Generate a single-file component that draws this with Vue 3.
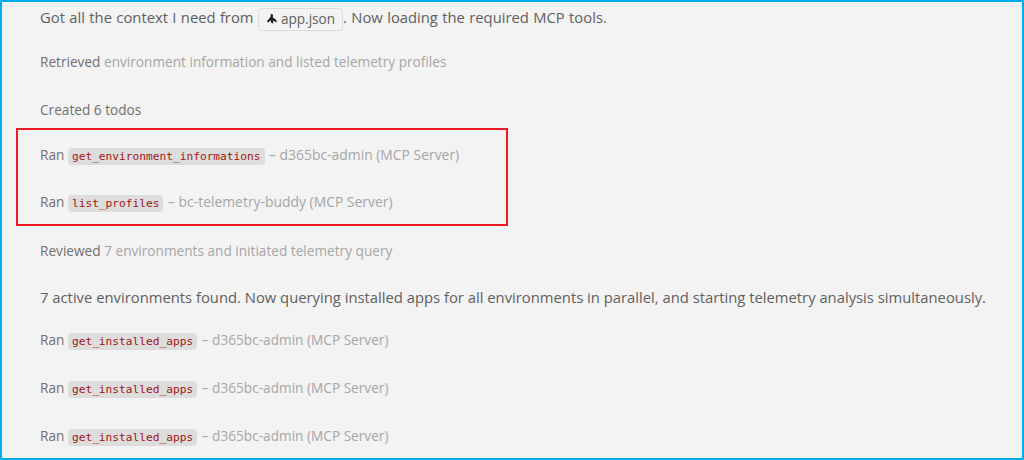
<template>
  <div class="frame">
    <div class="chat">
      <p class="msg first">
        Got all the context I need from
        <span class="ref"><svg class="ref-icon" viewBox="0 0 12 12" width="12" height="12"><path d="M4.8.8 7 1.8 6.8 4.4l3 2.2 1.4 3-3-1.4-1.2-.7.4 3-2-.5-.9-2.7-2.2 2.1L.8 8.3l2.7-3L4.6 3.6z" fill="#1f1f1f"/></svg><span class="ref-name">app.json</span></span>.
        Now loading the required MCP tools.
      </p>
      <p class="step retrieved">Retrieved <span class="dim">environment information and listed telemetry profiles</span></p>
      <p class="step created">Created 6 todos</p>
      <p v-for="run in highlighted" :key="run.tool" class="step ran">
        Ran <code>{{ run.tool }}</code> <span class="dim server">– {{ run.server }} (MCP Server)</span>
      </p>
      <p class="step reviewed">Reviewed <span class="dim">7 environments and initiated telemetry query</span></p>
      <p class="msg active">7 active environments found. Now querying installed apps for all environments in parallel, and starting telemetry analysis simultaneously.</p>
      <p v-for="n in 3" :key="n" class="step ran installed">
        Ran <code>get_installed_apps</code> <span class="dim">– d365bc-admin (MCP Server)</span>
      </p>
    </div>
    <div class="callout"></div>
  </div>
</template>

<script setup>
const highlighted = [
  { tool: 'get_environment_informations', server: 'd365bc-admin' },
  { tool: 'list_profiles', server: 'bc-telemetry-buddy' },
]
</script>

<style>
html, body {
  margin: 0;
  overflow: hidden;
}
</style>

<style scoped>
.frame {
  position: relative;
  box-sizing: border-box;
  width: 1024px;
  height: 460px;
  border: 2px solid #00aeef;
  background: #f3f3f3;
  overflow: hidden;
  font-family: "Open Sans", "Noto Sans", sans-serif;
}
.chat {
  padding: 3px 0 0 38px;
  display: flex;
  flex-direction: column;
}
p {
  margin: 0;
  height: 24px;
  line-height: 24px;
  white-space: nowrap;
}
.msg {
  font-size: 14.8px;
  color: #616161;
}
.first {
  word-spacing: 0.5px;
}
.step {
  font-size: 13.65px;
  color: #707070;
}
.dim {
  color: #a6a6a6;
}
.server {
  font-size: 13.9px;
}
.retrieved { margin-top: 21px; }
.created { margin-top: 24px; }
.ran { margin-top: 21px; }
.ran + .ran { margin-top: 23px; }
.reviewed { margin-top: 25px; }
.active { margin-top: 22px; }
.installed { margin-top: 19px; }
.installed + .installed { margin-top: 24px; }
.ref {
  display: inline-flex;
  align-items: center;
  gap: 3px;
  height: 23px;
  line-height: 22px;
  padding: 0 7px;
  border: 1px solid #dcdcdc;
  border-radius: 4px;
  box-sizing: border-box;
  vertical-align: middle;
}
.ref-name {
  font-size: 13.6px;
}
code {
  display: inline-block;
  height: 17px;
  line-height: 17px;
  padding: 0 4px;
  margin: 0 1px 0 0;
  border-radius: 4px;
  background: #dddddd;
  color: #a31515;
  font-family: "DejaVu Sans Mono", "Liberation Mono", monospace;
  font-size: 11.2px;
  vertical-align: middle;
}
.callout {
  position: absolute;
  left: 14px;
  top: 126px;
  width: 492px;
  height: 98px;
  box-sizing: border-box;
  border: 2px solid #ed1c24;
}
</style>
